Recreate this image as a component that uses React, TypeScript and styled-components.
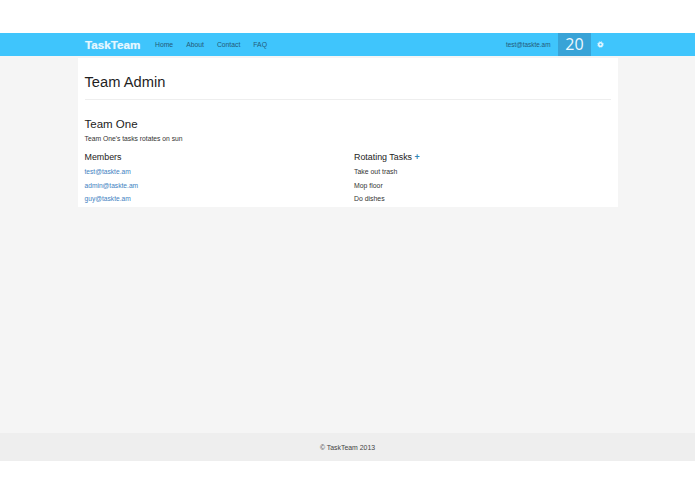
import React from "react";
import styled, { createGlobalStyle } from "styled-components";

const Global = createGlobalStyle`
  html, body { margin: 0; padding: 0; background: #fff; }
  body { font-family: "Liberation Sans", Arial, sans-serif; color: #222; }
`;
const Page = styled.div`
  width: 695px; height: 494px; padding-top: 33px; box-sizing: border-box;
  display: flex; flex-direction: column; overflow: hidden;
`;
const NavBar = styled.header`
  height: 23px; flex: none; background: #3fc5fc; padding: 0 78px;
  display: flex; justify-content: center;
`;
const NavInner = styled.div`
  width: 540px; display: flex; align-items: center; position: relative;
`;
const Brand = styled.a`
  margin-left: 7px; width: 70px; font-size: 11.7px; font-weight: 700; color: #e6f7ff;
  text-shadow: 0 0 1px rgba(255,255,255,.5);
`;
const NavLinks = styled.nav`
  display: flex; gap: 13px; font-size: 6.8px; color: #245a78;
`;
const Right = styled.div`
  margin-left: auto; display: flex; align-items: center; height: 100%;
`;
const Email = styled.span`
  font-size: 6.4px; color: #245a78; margin-right: 7.5px;
`;
const Count = styled.span`
  width: 33px; height: 23px; background: #38a3d7; color: #eef9ff;
  font: 16px/23px "Open Sans", sans-serif; text-align: center;
`;
const Gear = styled.svg`
  display: block; width: 7px; height: 7px; margin: 0 13px 1px 6px; color: #e8f8ff;
`;
const Main = styled.main`
  flex: 1; background: #f5f5f5; display: flex; justify-content: center; align-items: flex-start;
`;
const Card = styled.section`
  width: 540px; margin-top: 2px; background: #fff; padding: 0 7px; height: 149px;
  box-sizing: border-box;
`;
const Title = styled.h1`
  margin: 0; padding: 15px 0 8px; font-size: 14.7px; line-height: 18px; font-weight: 400; color: #1f1f1f;
  border-bottom: 1px solid #eee;
`;
const TeamName = styled.h2`
  margin: 17px 0 0; font-size: 11.5px; line-height: 14px; font-weight: 400; color: #222;
`;
const Description = styled.p`
  margin: 3px 0 0; font-size: 6.75px; line-height: 10px; color: #333;
`;
const Columns = styled.div`
  display: grid; grid-template-columns: 269.5px 1fr; margin-top: 8px;
`;
const Heading = styled.h3`
  margin: 0; font-size: 8.9px; line-height: 11px; font-weight: 400; color: #222;
`;
const Plus = styled.span`
  color: #2f86b8; font-weight: 700;
`;
const List = styled.ul`
  list-style: none; margin: 2px 0 0; padding: 0; font-size: 6.9px; line-height: 13.6px;
`;
const MemberLink = styled.a`
  color: #3e7fc1; font-size: 6.65px;
`;
const Task = styled.li`
  color: #333;
`;
const Footer = styled.footer`
  height: 28px; flex: none; box-sizing: border-box; padding-top: 1px; background: #eee; color: #444; font-size: 6.9px;
  display: flex; align-items: center; justify-content: center;
`;
const Blank = styled.div`
  height: 33px; flex: none; background: #fff;
`;

export default function App() {
  return (
    <Page>
      <Global />
      <NavBar>
        <NavInner>
          <Brand>TaskTeam</Brand>
          <NavLinks>
            <span>Home</span><span>About</span><span>Contact</span><span>FAQ</span>
          </NavLinks>
          <Right>
            <Email>test@taskte.am</Email>
            <Count>20</Count>
            <Gear viewBox="0 0 14 14" aria-hidden="true">
              <circle cx="7" cy="7" r="3.6" fill="none" stroke="currentColor" strokeWidth="3" />
              <circle cx="7" cy="7" r="5.8" fill="none" stroke="currentColor" strokeWidth="1.6" strokeDasharray="2.2 2.35" />
            </Gear>
          </Right>
        </NavInner>
      </NavBar>
      <Main>
        <Card>
          <Title>Team Admin</Title>
          <TeamName>Team One</TeamName>
          <Description>Team One's tasks rotates on sun</Description>
          <Columns>
            <div>
              <Heading>Members</Heading>
              <List>
                <li><MemberLink>test@taskte.am</MemberLink></li>
                <li><MemberLink>admin@taskte.am</MemberLink></li>
                <li><MemberLink>guy@taskte.am</MemberLink></li>
              </List>
            </div>
            <div>
              <Heading>Rotating Tasks <Plus>+</Plus></Heading>
              <List>
                <Task>Take out trash</Task>
                <Task>Mop floor</Task>
                <Task>Do dishes</Task>
              </List>
            </div>
          </Columns>
        </Card>
      </Main>
      <Footer>© TaskTeam 2013</Footer>
      <Blank />
    </Page>
  );
}
